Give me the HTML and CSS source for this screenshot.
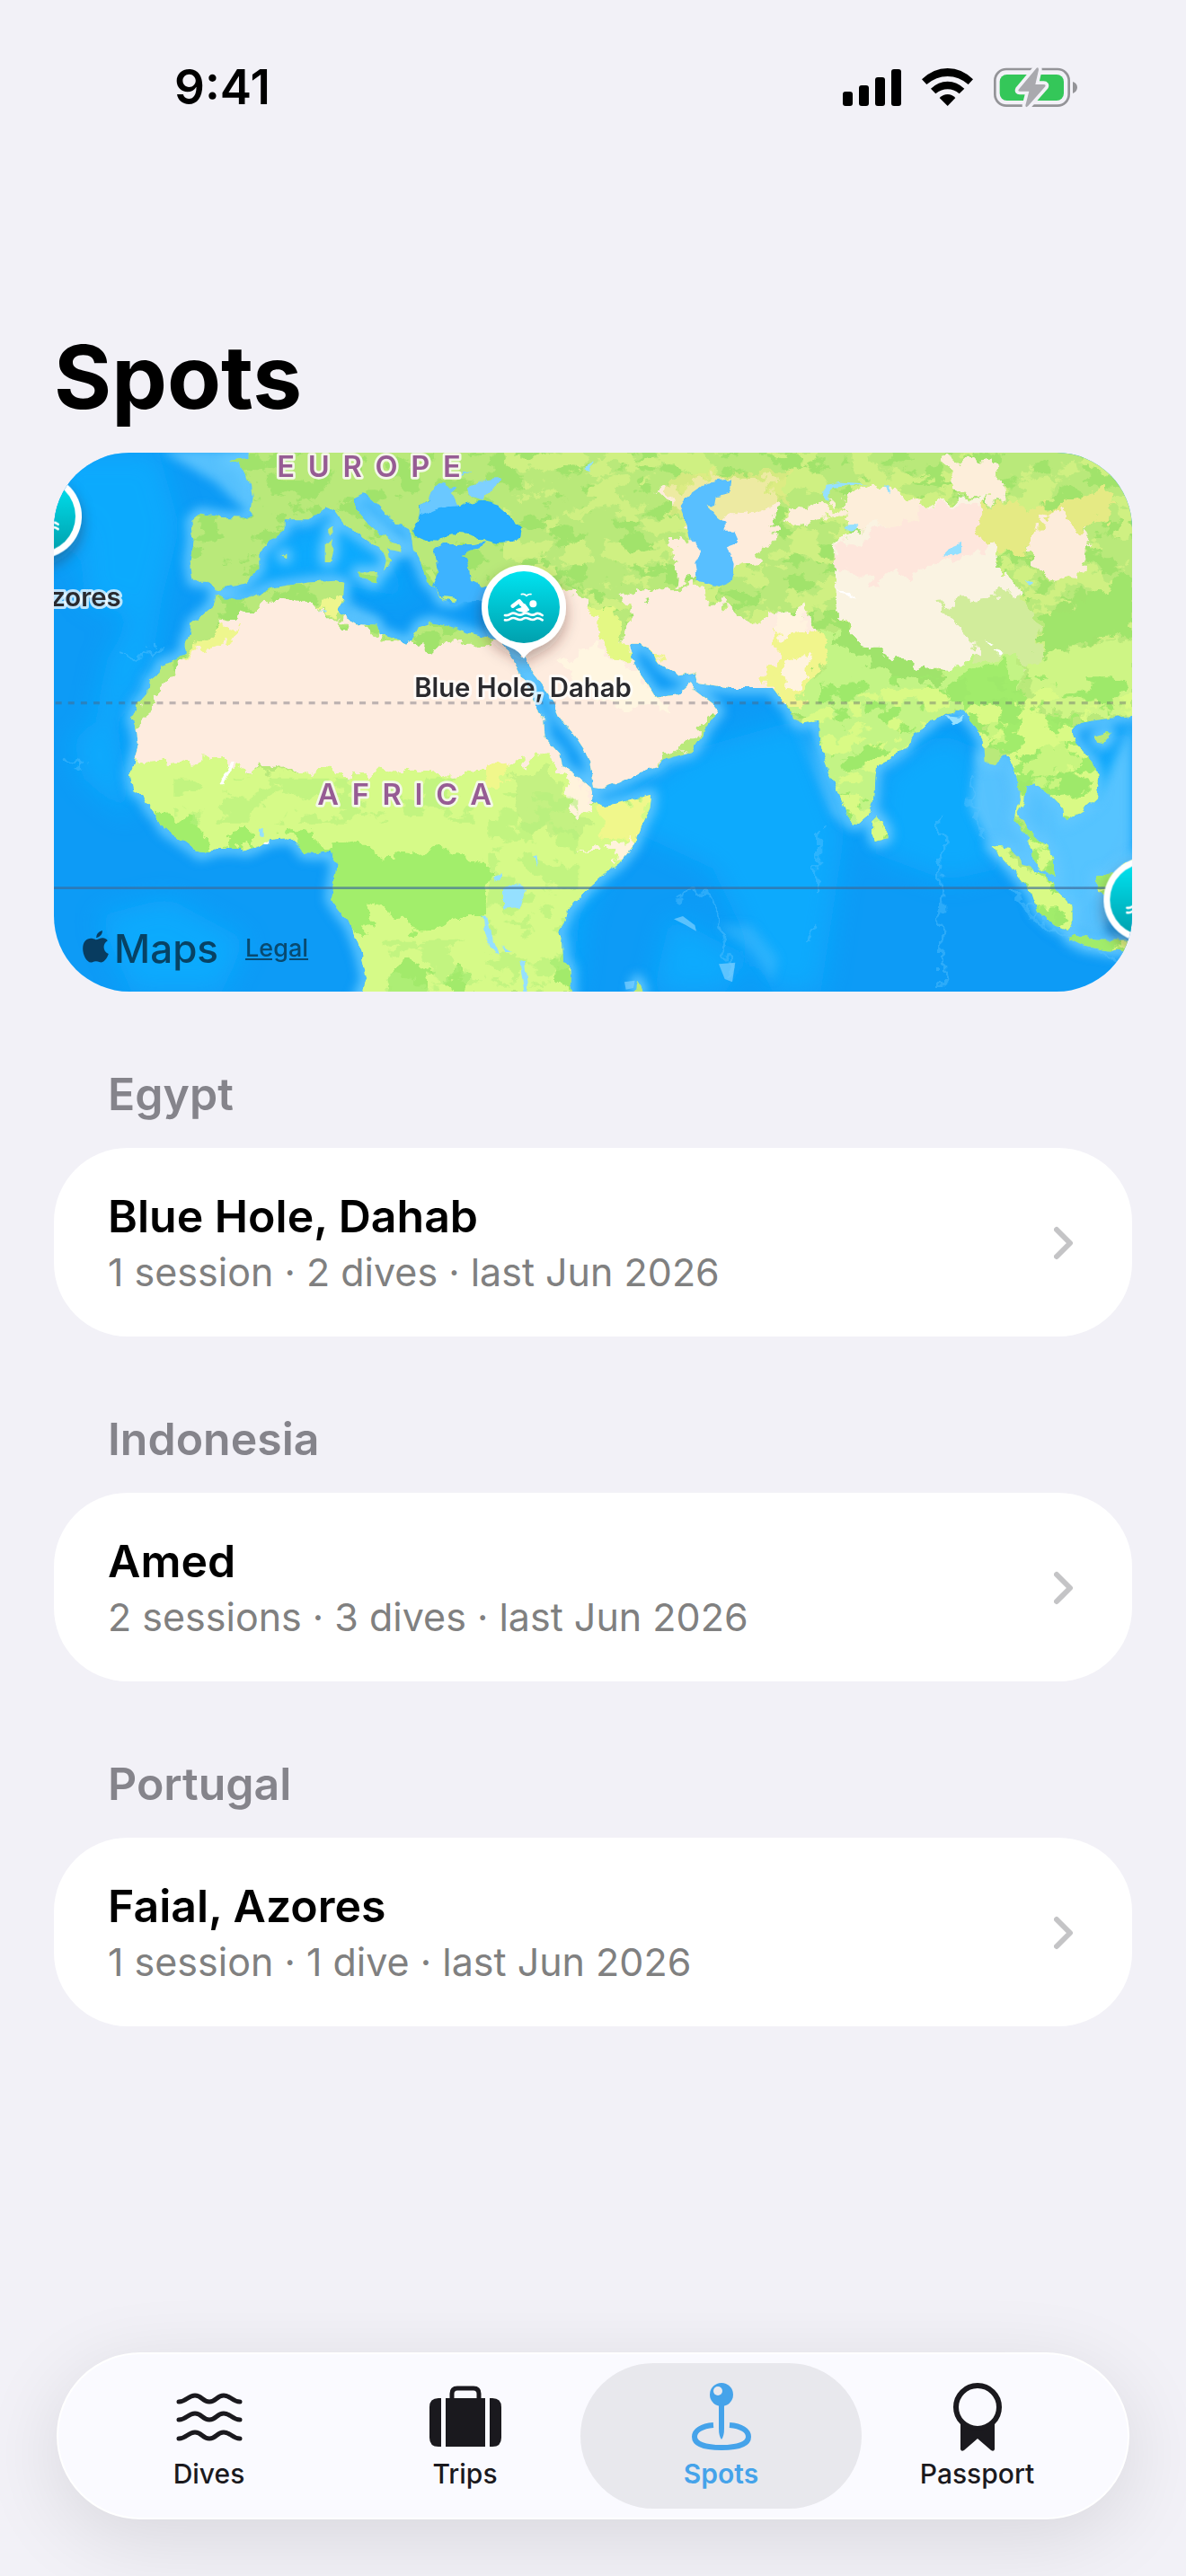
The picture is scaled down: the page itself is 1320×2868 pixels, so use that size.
FILE: index.html
```html
<!DOCTYPE html>
<html lang="en">
<head>
    <meta charset="utf-8">
    <meta name="viewport" content="width=device-width, initial-scale=1">
    <title>Spots</title>
    <link rel="stylesheet" href="styles.css">
</head>
<body>
<header class="status-bar">
    <span class="time">9:41</span>
    <div class="status-icons">
        <svg width="65" height="41" viewBox="111 48 195 123" aria-hidden="true">
            <rect x="111" y="123" width="33" height="48" rx="9"/>
            <rect x="165" y="102" width="33" height="69" rx="9"/>
            <rect x="219" y="75" width="33" height="96" rx="9"/>
            <rect x="273" y="48" width="33" height="123" rx="9"/>
        </svg>
        <svg width="57" height="42" viewBox="375 45 171 126" aria-hidden="true">
            <path d="M375 82Q413 45 461 45T546 82L530 99Q499 72 461 72T391 99Z"/>
            <path d="M405 113Q430 89 461 89T517 113L500 130Q482 115 461 115T421 130Z"/>
            <path d="M434 144Q446 132 461 132T487 144L461 171Z"/>
        </svg>
        <svg width="93" height="45" viewBox="615 42 279 135" aria-hidden="true">
            <rect x="619" y="48" width="247" height="122" rx="38" fill="none" stroke="#949498" stroke-width="8"/>
            <path d="M879 90Q894 95 894 109T879 129Z" fill="#949498"/>
            <rect x="635" y="66" width="214" height="87" rx="24" fill="#34c759"/>
            <path d="M758 44L698 116Q695 122 702 122H733L721 169Q721 178 729 172L787 106Q790 99 782 99H754L765 50Q765 40 758 44Z" fill="#a9a9ae" stroke="#f2f1f7" stroke-width="22" stroke-linejoin="round" paint-order="stroke"/>
        </svg>
    </div>
</header>

<main class="content">
    <h1>Spots</h1>

    <section class="map" aria-label="Map of dive spots">
        <svg class="map-canvas" viewBox="0 12 3600 1800" preserveAspectRatio="xMidYMid slice">
            <defs>
                <linearGradient id="pinFill" x1="0" y1="0" x2="0" y2="1">
                    <stop offset="0" stop-color="#00e3f0"/>
                    <stop offset="1" stop-color="#00a0ad"/>
                </linearGradient>
                <filter id="soft" x="-10%" y="-10%" width="120%" height="120%"><feGaussianBlur stdDeviation="18"/></filter>
                <filter id="softer" x="-20%" y="-20%" width="140%" height="140%"><feGaussianBlur stdDeviation="45"/></filter>
                <filter id="shadow" x="-40%" y="-40%" width="180%" height="200%">
                    <feDropShadow dx="0" dy="24" stdDeviation="24" flood-color="#401818" flood-opacity=".35"/>
                </filter>
                <filter id="coast" filterUnits="userSpaceOnUse" x="0" y="12" width="3600" height="1800" color-interpolation-filters="sRGB">
                    <feTurbulence type="fractalNoise" baseFrequency=".03" numOctaves="2" seed="4"/>
                    <feDisplacementMap in="SourceGraphic" scale="24" xChannelSelector="R" yChannelSelector="G"/>
                </filter>
                <filter id="ragged" filterUnits="userSpaceOnUse" x="0" y="12" width="3600" height="1800" color-interpolation-filters="sRGB">
                    <feTurbulence type="fractalNoise" baseFrequency=".018" numOctaves="3" seed="9"/>
                    <feDisplacementMap in="SourceGraphic" scale="90" xChannelSelector="R" yChannelSelector="G"/>
                </filter>
                <!-- vegetation speckle, kept only inside the shape it is applied to -->
                <filter id="speckle" filterUnits="userSpaceOnUse" x="0" y="12" width="3600" height="1800" color-interpolation-filters="sRGB">
                    <feTurbulence type="fractalNoise" baseFrequency=".009 .013" numOctaves="5" seed="12"/>
                    <feColorMatrix values="0 0 0 0 0  0 0 0 0 0  0 0 0 0 0  30 0 0 0 -16.5"/>
                    <feComposite in="SourceGraphic" operator="in"/>
                </filter>
                <filter id="speckle2" filterUnits="userSpaceOnUse" x="0" y="12" width="3600" height="1800" color-interpolation-filters="sRGB">
                    <feTurbulence type="fractalNoise" baseFrequency=".009 .013" numOctaves="5" seed="31"/>
                    <feColorMatrix values="0 0 0 0 0  0 0 0 0 0  0 0 0 0 0  0 30 0 0 -16"/>
                    <feComposite in="SourceGraphic" operator="in"/>
                </filter>
                <path id="africa" d="M540 490L525 530 460 585 455 620 440 640V683L385 712 355 720 350 750 318 775 312 815 280 850 260 900 275 940 282 990 270 1030 257 1085 268 1140 300 1160 320 1200 355 1240 370 1270 430 1310 490 1353 550 1335 620 1335 640 1342 670 1330 720 1305 790 1298 815 1320 835 1350 890 1352 915 1345 945 1380 935 1440 930 1470 925 1500 950 1540 990 1590 1010 1640 1025 1680 1040 1750 1045 1770 1015 1840H1725L1723 1735 1700 1705 1698 1650 1685 1620 1705 1570 1720 1535 1780 1470 1830 1425 1890 1380 1935 1325 1965 1250 1990 1200 1995 1155 1900 1178 1830 1195 1800 1175 1795 1150 1790 1130 1730 1080 1700 1060 1690 1020 1640 965 1635 900 1610 870 1590 800 1550 740 1515 670 1500 640 1450 632 1370 612 1320 595 1260 578 1220 590 1200 630 1180 650 1130 628 1085 615 1080 590 1010 585 970 560 945 540 965 505 970 450 935 440 860 445 780 455 720 465 650 500 570 500Z"/>
                <path id="eurasia" d="M650 -20V30L575 40 620 50 640 90 660 120 665 160 655 230 560 228 490 215 460 240 465 300 455 380 465 440 510 440 545 470 600 455 640 445 685 400V345L730 300 770 270V235L850 235 910 195 935 205 970 255 1050 310 1100 345 1110 370 1100 410 1125 370 1120 335 1160 345 1150 320 1085 280 1045 245 1005 200V160L1035 145 1080 185 1120 230 1190 270 1200 340 1225 385 1245 440 1275 465 1295 505 1340 508 1390 470 1450 465 1540 470 1560 520 1540 600 1530 640 1560 700 1580 680 1585 720 1610 760 1640 800 1670 850 1695 905 1735 950 1775 1010 1790 1050 1800 1130 1830 1135 1900 1110 1960 1080 2020 1060 2030 1040 2130 1010 2165 960 2170 940 2200 900 2220 875 2200 850 2135 800 2128 782 2085 820 2010 830 1985 790 1935 720 1920 650 1960 650 2000 680 2030 720 2080 755 2140 745 2150 780 2260 798 2400 798 2430 840 2460 870 2470 905 2500 918 2555 905V960L2570 1030 2600 1110 2630 1170 2650 1230 2665 1250 2685 1250 2715 1225 2735 1180 2740 1100 2745 1060 2790 1035 2840 1000 2870 955 2920 920 2950 890 3040 870 3050 895 3080 930 3105 980 3110 1045 3140 1050 3175 1020 3200 1050 3215 1100 3225 1170 3208 1240 3255 1300 3270 1370 3300 1410 3350 1428 3335 1360 3310 1320 3265 1285 3235 1250 3220 1215 3240 1180 3245 1125 3275 1120 3320 1150 3370 1200 3375 1240 3440 1200 3480 1165 3485 1110 3470 1050 3410 980 3395 940 3430 915 3480 905 3640 885V-20Z"/>
                <path id="islands" d="M905 320L925 300 935 330 925 375 905 375ZM918 265L930 258 932 285 920 290ZM1010 410L1080 408 1075 448 1045 440ZM760 355L775 350 775 365ZM2735 1240L2750 1225 2780 1270 2780 1300 2745 1312 2733 1280ZM3130 1325L3190 1335 3240 1385 3310 1425 3345 1470 3400 1530 3400 1590 3385 1610 3340 1590 3285 1540 3265 1480 3230 1440 3190 1390ZM3390 1635L3410 1620 3480 1640 3560 1640 3620 1640V1680L3520 1675 3440 1660ZM3480 1430L3520 1420 3640 1350V1560L3530 1500 3490 1480ZM3475 960L3520 945 3530 955 3505 985 3485 980ZM1940 1812L1948 1775 1965 1812Z"/>
                <clipPath id="land"><use href="#africa"/><use href="#eurasia"/><use href="#islands"/></clipPath>
                <g id="swimmer" fill="none" stroke="#fff" stroke-width="8" stroke-linecap="round" stroke-linejoin="round">
                    <path d="M-63 27Q-53 29-45 23T-24 23-3 23 18 23 39 23 62 27M-63 43Q-53 45-45 39T-24 39-3 39 18 39 39 39 62 43"/>
                    <path d="M-37-4L-15-20 0-2" stroke-width="13"/>
                    <path d="M-14-8L4-10 18 9 4 17-17 13-26 8-4 1Z" fill="#fff" stroke-width="3"/>
                    <circle cx="31" cy="-11" r="12" fill="#fff" stroke="none"/>
                    <path d="M-8-43Q2-46 9-38 16-45 24-43" stroke-width="5"/>
                </g>
                <g id="pin">
                    <path d="M0 172Q-14 146-50 132A141 141 0 1 1 50 132Q14 146 0 172Z" fill="#fff" filter="url(#shadow)"/>
                    <circle r="120" fill="url(#pinFill)"/>
                    <use href="#swimmer"/>
                </g>
            </defs>

            <!-- ocean -->
            <rect y="12" width="3600" height="1800" fill="#0d9bf6"/>
            <g fill="#10aeff" filter="url(#softer)" opacity=".8">
                <path d="M0 12H350L420 260 360 500 330 700 230 900 140 880 180 700 260 560 100 500 90 250 0 430Z"/>
                <path d="M700 300L1000 200 1200 500 900 440 600 480Z"/>
                <path d="M60 980L200 850 260 1240 100 1100Z"/>
                <path d="M150 1560L380 1500 640 1640 560 1812H260Z"/>
                <path d="M1850 1200L2150 1000 2500 900 2640 1280 2560 1812H2400L2200 1400 1900 1260 1760 1560 1740 1812H1680V1560Z"/>
                <path d="M2760 1080L2960 950 3080 1000 3160 1400 2980 1440 2740 1350Z"/>
                <path d="M3300 1180L3600 900V1300L3400 1600 3300 1500ZM2060 1560L2320 1700 2240 1812H2000Z"/>
            </g>
            <g fill="#6acbff" filter="url(#soft)" opacity=".8">
                <path d="M350 0H670V200L620 190 540 110Z"/>
                <path d="M960 500L1080 560 1090 600 980 570ZM1000 140L1200 330 1170 350 1060 300Z"/>
                <path d="M2470 900L2600 1220 2700 1290 2640 1240 2520 1000Z"/>
                <path d="M3080 1000L3240 1060 3480 1180 3600 900V1400L3500 1640 3380 1600 3300 1460 3120 1320 3060 1200Z"/>
                <path d="M2210 1590L2330 1590 2420 1700 2400 1780 2330 1680Z" opacity=".4"/>
            </g>
            <g fill="none" stroke="#62c7ff" stroke-width="38" stroke-linejoin="round" filter="url(#soft)">
                <use href="#africa"/><use href="#eurasia"/><use href="#islands"/>
            </g>
            <g fill="none" stroke="#5cc4ff" stroke-width="10" opacity=".4" filter="url(#ragged)">
                <path d="M220 690L270 700 330 690 360 650M30 1020L100 1060 70 1080M2555 1270V1480M2535 1590L2510 1660M2960 1230V1812M2080 1490L2160 1470 2230 1600 2260 1760M3200 1480L3350 1620 3560 1710M3070 1080L3060 1180 3110 1310"/>
            </g>
            <path d="M2070 1570L2100 1560 2140 1590 2145 1610 2110 1590ZM2220 1720L2275 1715 2265 1780 2240 1770ZM1905 1780L1940 1775 1935 1800 1910 1805Z" fill="#7fd0ff" opacity=".7"/>

            <!-- land -->
            <g filter="url(#coast)">
                <g clip-path="url(#land)">
                    <rect y="-20" width="3640" height="1860" fill="#b9e97a"/>
                    <path d="M400 -20H3640V900H400Z" fill="#9be268" filter="url(#speckle)" opacity=".8"/>
                    <path d="M1500 -20H3640V700H1500Z" fill="#cff082" filter="url(#speckle2)"/>

                    <g filter="url(#ragged)">
                        <!-- deserts -->
                        <path d="M400 720L590 570 680 540 760 500 860 520 960 570 1200 660 1480 650 1640 480 1780 500 1830 600 1900 640 1940 560 1880 470 1980 490 2120 450 2240 520 2330 590 2390 540 2520 560 2560 620 2500 740 2420 840 2200 900 1900 1180H1700L1500 1080 1300 1110 1000 1090 700 1070 200 1060Z" fill="#feecdf"/>
                        <path d="M2020 150L2200 90 2400 100 2420 200 2360 360 2180 420 2060 450 2070 300 2160 260Z" fill="#feecdb"/>
                        <path d="M2060 80H2450V190L2280 200 2170 300 2060 220Z" fill="#e3ea84" opacity=".65"/>
                        <path d="M1800 540L1860 530 1900 640 1950 700 1880 700 1820 640Z" fill="#e4f884"/>
                        <path d="M430 690L560 590 620 610 500 680ZM860 520L970 480V560ZM1960 670L2030 700 2000 740Z" fill="#eef68d"/>
                        <path d="M1680 720L1800 650 1960 740 2050 880 1850 860Z" fill="#fff6e1"/>
                        <!-- Tibet and the Gobi -->
                        <path d="M2600 330L2700 260 2900 190 3100 160 3150 400 3240 480 3120 600 3080 740 2900 740 2720 680 2620 560Z" fill="#faf3e2"/>
                        <path d="M2600 340L2900 190 3140 180 3120 330 2960 370 2860 420 2700 440 2600 400Z" fill="#fee6dc"/>
                        <path d="M2980 40L3150 30 3170 170 3000 150ZM2440 200L2560 180 2640 220 2500 250ZM2600 180L2700 120 2900 170 2880 240 2680 260Z" fill="#fdeeda"/>
                        <path d="M3100 170L3340 190 3500 120 3560 200 3400 290 3280 340 3160 350 3080 290Z" fill="#e5ea84"/>
                        <path d="M3280 240L3360 190 3380 260 3450 270 3440 420 3340 440 3250 370Z" fill="#fdecdb"/>
                        <!-- south and east Asia -->
                        <path d="M2960 520L3220 480 3300 620 3280 720 3080 700 3040 620Z" fill="#d1ec9b"/>
                        <path d="M2560 600L2640 600 2760 720 2960 760 3060 700 3220 690 3240 900 3160 960 2980 880 2740 1300 2500 1240 2540 900 2420 870 2560 740Z" fill="#c3f485"/>
                        <path d="M2590 540L2700 650 2860 720 3000 760 2960 790 2790 760 2640 670Z" fill="#9fe36b"/>
                        <path d="M3020 760L3180 700 3260 880 3420 900 3520 1060V1220L3400 1260 3420 1400 3640 1340V1720H3100V1350L3260 1400 3180 1020 3040 880Z" fill="#a1ec6b"/>
                        <path d="M3240 1000L3360 970 3420 1060 3420 1120 3260 1130ZM3380 1160L3460 1090 3470 1160ZM3100 880L3160 860 3160 960 3120 980Z" fill="#c8f57f"/>
                        <path d="M3300 560L3420 520 3560 420 3640 440V600L3420 640 3300 740Z" fill="#a0e56b"/>
                        <path d="M3240 720L3640 600V900L3300 880Z" fill="#cef585"/>
                        <path d="M2410 600L2540 600 2600 640 2480 860 2380 820Z" fill="#f1f58c"/>
                        <path d="M2440 700L2540 680 2480 830 2450 820ZM2420 560L2500 520 2510 610 2430 650Z" fill="#fff3df"/>
                    </g>
                    <g fill="#9ee96a" filter="url(#speckle)">
                        <path d="M2560 760H3640V1700H2500Z"/>
                    </g>
                    <g fill="#d9fa85" filter="url(#speckle2)">
                        <path d="M2700 800H3640V1700H2500V900Z"/>
                    </g>

                    <!-- tropical Africa -->
                    <g filter="url(#ragged)">
                        <path d="M200 1050L340 1030 380 1065 480 1035 620 1055 720 1100 840 1070 1000 1090 1200 1085 1440 1090 1480 1060 1640 1030 1690 1060 1740 1200 2020 1150 2040 1400 1800 1850H900L860 1400 200 1360Z" fill="#d6fa88"/>
                        <path d="M340 1220L470 1240 520 1330 500 1380H340ZM560 1330L600 1265 660 1290 680 1340ZM770 1270L840 1270 900 1320 1000 1310 1100 1350 1200 1360 1270 1310 1350 1360 1470 1400 1430 1560 1340 1560 1240 1620 1160 1570 1060 1530 1050 1600 1020 1630 900 1480 830 1370Z" fill="#a2ee6b"/>
                        <path d="M1520 1090L1640 1060 1720 1170 1790 1260 1700 1300 1560 1250Z" fill="#c4f182"/>
                        <path d="M1430 1070L1520 1040 1510 1110 1440 1110ZM1820 1200L2020 1150 1950 1300 1820 1290Z" fill="#f0f78b"/>
                        <path d="M1690 1070L1760 1090 1810 1200 1740 1220ZM1840 1320L1950 1290 1900 1370ZM1760 1350L1830 1330 1820 1350Z" fill="#fff3dc"/>
                        <path d="M1150 1700L1260 1740 1240 1840H1120ZM1280 1760L1380 1750 1370 1800ZM1650 1710L1740 1700 1730 1830 1690 1780Z" fill="#a2ea6b"/>
                    </g>
                    <path d="M1450 1150H1750V1840H1100V1640H1450ZM400 1100H1400V1250H400Z" fill="#b4f07c" filter="url(#speckle2)" opacity=".6"/>
                </g>

                <!-- inland water -->
                <path d="M1200 270L1220 230 1222 190 1260 160 1345 190 1355 195 1380 180 1430 172 1480 188 1520 225 1560 262 1555 290 1530 312 1480 315 1430 302 1385 282 1350 278 1310 290 1280 308 1240 305 1210 292Z" fill="#25adff"/>
                <path d="M1220 225L1225 185 1250 170 1260 142 1285 120 1305 108 1320 128 1350 130 1325 150 1340 165 1350 190 1290 195Z" fill="#6ac8ff"/>
                <path d="M1380 130L1440 100 1495 95 1460 140 1430 170 1385 155ZM1355 95L1370 80 1395 75 1370 90Z" fill="#7ed0ff"/>
                <path d="M2090 190L2110 160 2180 110 2260 100 2255 150 2210 160 2205 190 2180 190 2215 230 2240 250 2240 275 2275 275 2290 310 2250 325 2270 380 2265 440 2220 460 2150 440 2140 380 2160 340 2130 300 2105 230Z" fill="#58bfff"/>
                <path d="M2570 160L2575 120 2630 110 2715 115 2640 122 2600 125 2585 170ZM2970 355L3000 325 3030 312 3030 345 3000 358ZM2770 120L2790 125 2785 145ZM2640 262L2690 255 2670 272ZM3245 437L3270 445 3262 458ZM1770 70L1800 40 1790 75ZM2975 888L3040 895 3000 920Z" fill="#95e0ff"/>
                <path d="M1500 1470L1540 1452 1578 1470 1555 1530 1500 1535ZM1432 1555L1445 1560 1460 1620 1490 1690 1475 1690 1440 1620ZM1468 1430L1497 1410 1495 1425 1472 1445ZM1495 1660L1530 1680 1510 1680ZM1555 1710L1572 1715 1583 1812H1570ZM1603 1355L1615 1350 1620 1400ZM885 540L915 542 910 552ZM687 1265H698V1298H687Z" fill="#95e0ff"/>
                <path d="M1270 330L1300 318 1350 318 1400 318 1440 310 1430 325 1365 350 1385 390 1392 440 1450 470 1440 510 1330 520 1300 500 1265 450 1285 410 1272 370Z" fill="#3db3ff"/>
                <path d="M1240 405L1262 402 1280 430 1270 450ZM1300 492L1345 498 1340 508 1302 500Z" fill="#c3ee78"/>
                <path d="M550 1120L590 1050 600 1050 565 1120ZM3110 640L3140 650 3130 655ZM3135 670L3170 680 3160 692ZM2610 475L2660 480 2675 500ZM700 1310H715V1317H700Z" fill="#fff"/>
            </g>

            <!-- tropic and equator -->
            <path d="M5 848H3600" stroke="#5a5a68" stroke-opacity=".38" stroke-width="10" stroke-dasharray="21 21.3"/>
            <path d="M0 1466H3600" stroke="#3c6a98" stroke-opacity=".65" stroke-width="8"/>

            <g class="region">
                <text x="745" y="94">EUROPE</text>
                <text x="880" y="1188">AFRICA</text>
            </g>

            <use href="#pin" x="-48" y="224"/>
            <use href="#pin" x="1569" y="528"/>
            <use href="#pin" x="3646" y="1505"/>

            <g class="place">
                <text x="224" y="525" text-anchor="end">Faial, Azores</text>
                <text x="1566" y="828" text-anchor="middle">Blue Hole, Dahab</text>
            </g>
        </svg>
        <div class="attribution">
            <span class="brand">
                <svg width="29" height="36" viewBox="98 704 86 108" aria-hidden="true">
                    <path d="M143 729Q142 711 163 704 165 722 143 729ZM141 735C151 734 168 720 181 738 162 750 165 775 184 782 177 801 166 813 155 810 145 805 137 806 130 810 113 816 98 787 98 765 98 730 124 725 141 735Z" fill="#083c60"/>
                </svg>
                Maps
            </span>
            <a class="legal" href="#legal">Legal</a>
        </div>
    </section>

    <section class="group">
        <h2>Egypt</h2>
        <a class="card" href="#blue-hole">
            <span class="card-text">
                <strong>Blue Hole, Dahab</strong>
                <span>1 session · 2 dives · last Jun 2026</span>
            </span>
            <svg class="chevron" width="22" height="38" viewBox="0 0 22 38" aria-hidden="true"><path d="M3 4L18 19 3 34"/></svg>
        </a>
    </section>

    <section class="group">
        <h2>Indonesia</h2>
        <a class="card" href="#amed">
            <span class="card-text">
                <strong>Amed</strong>
                <span>2 sessions · 3 dives · last Jun 2026</span>
            </span>
            <svg class="chevron" width="22" height="38" viewBox="0 0 22 38" aria-hidden="true"><path d="M3 4L18 19 3 34"/></svg>
        </a>
    </section>

    <section class="group">
        <h2>Portugal</h2>
        <a class="card" href="#faial">
            <span class="card-text">
                <strong>Faial, Azores</strong>
                <span>1 session · 1 dive · last Jun 2026</span>
            </span>
            <svg class="chevron" width="22" height="38" viewBox="0 0 22 38" aria-hidden="true"><path d="M3 4L18 19 3 34"/></svg>
        </a>
    </section>
</main>

<nav class="tab-bar">
    <a class="tab" href="#dives">
        <svg width="84" height="78" viewBox="0 0 84 78" aria-hidden="true">
            <g fill="none" stroke="currentColor" stroke-width="5" stroke-linecap="round">
                <path d="M8 22C17 22 18 15 26 15S34 22 42 22 50 15 58 15 67 22 76 22"/>
                <path d="M8 42C17 42 18 35 26 35S34 42 42 42 50 35 58 35 67 42 76 42"/>
                <path d="M8 63C17 63 18 56 26 56S34 63 42 63 50 56 58 56 67 63 76 63"/>
            </g>
        </svg>
        Dives
    </a>
    <a class="tab" href="#trips">
        <svg width="84" height="78" viewBox="0 0 84 78" aria-hidden="true">
            <path d="M27 19V13Q27 7 33 7H51Q57 7 57 13V19" fill="none" stroke="currentColor" stroke-width="5"/>
            <path d="M15 18V72H12Q2 72 2 62V28Q2 18 12 18ZM20 18H64V72H20ZM69 18H72Q82 18 82 28V62Q82 72 72 72H69Z" fill="currentColor"/>
        </svg>
        Trips
    </a>
    <a class="tab active" href="#spots" aria-current="page">
        <svg width="84" height="78" viewBox="0 0 84 78" aria-hidden="true">
            <path d="M33 48C20 49 12 54 12 61 12 69 24 73 42 73S72 69 72 61C72 54 64 49 51 48" fill="none" stroke="currentColor" stroke-width="6"/>
            <path d="M39 26H45V52Q45 60 42 64 39 60 39 52Z" fill="currentColor"/>
            <circle cx="42" cy="14" r="13" fill="currentColor"/>
            <circle cx="38" cy="10" r="5" fill="#e8e8ed"/>
        </svg>
        Spots
    </a>
    <a class="tab" href="#passport">
        <svg width="84" height="78" viewBox="0 0 84 78" aria-hidden="true">
            <circle cx="42" cy="28" r="24" fill="none" stroke="currentColor" stroke-width="6"/>
            <path d="M23 45Q31 54 42 54T61 45V75Q60 78 57 76L42 63 27 76Q24 78 23 75Z" fill="currentColor"/>
        </svg>
        Passport
    </a>
</nav>
</body>
</html>
```
FILE: styles.css
```css
* {
    box-sizing: border-box;
}
body {
    font-family: Inter, "Liberation Sans", sans-serif;
    background-color: #f2f1f7;
    color: #000;
    margin: 0;
    min-height: 100vh;
    display: flex;
    flex-direction: column;
}
a {
    color: inherit;
    text-decoration: none;
}
.status-bar {
    display: flex;
    justify-content: space-between;
    align-items: center;
    padding: 66px 121px 0 194px;
}
.time {
    font-size: 53px;
    line-height: 62px;
    font-weight: 600;
}
.status-icons {
    display: flex;
    align-items: center;
    gap: 23px;
}
.content {
    padding: 230px 60px 60px;
}
h1 {
    font-size: 98px;
    line-height: 124px;
    font-weight: 700;
    margin: 0 0 22px;
}
.map {
    position: relative;
    aspect-ratio: 2 / 1;
    border-radius: 84px;
    overflow: hidden;
}
.map-canvas {
    display: block;
    width: 100%;
    height: 100%;
}
.region {
    font-size: 98px;
    font-weight: 600;
    letter-spacing: 44px;
    fill: #965c94;
    stroke: #f4f8e8;
    stroke-width: 16px;
    stroke-linejoin: round;
    paint-order: stroke;
}
.place {
    font-size: 88px;
    font-weight: 600;
    fill: #2a2a2e;
    stroke: #ffffffb8;
    stroke-width: 18px;
    stroke-linejoin: round;
    paint-order: stroke;
}
.attribution {
    position: absolute;
    left: 32px;
    bottom: 20px;
    display: flex;
    align-items: center;
    gap: 30px;
    color: #084a70;
}
.brand {
    display: flex;
    align-items: baseline;
    gap: 6px;
    font-size: 44px;
    line-height: 56px;
    font-weight: 500;
    color: #074264;
}
.legal {
    font-size: 27px;
    line-height: 56px;
    font-weight: 500;
    text-decoration: underline;
}
h2 {
    font-size: 50px;
    line-height: 66px;
    font-weight: 600;
    color: #85848b;
    margin: 0;
    padding: 81px 60px 27px;
}
.card {
    display: flex;
    justify-content: space-between;
    align-items: center;
    padding: 44px 65px 42px 60px;
    background-color: #fff;
    border-radius: 82px;
}
.card-text {
    display: flex;
    flex-direction: column;
    font-size: 43px;
    line-height: 60px;
    color: #808080;
}
.card-text strong {
    font-size: 50px;
    line-height: 64px;
    font-weight: 600;
    color: #000;
}
.chevron path {
    fill: none;
    stroke: #c4c4c6;
    stroke-width: 6px;
    stroke-linecap: round;
    stroke-linejoin: round;
}
.tab-bar {
    display: grid;
    grid-template-columns: repeat(4, 1fr);
    margin: auto 63px 63px;
    padding: 10px 25px;
    background-color: #fafaff;
    border: 2px solid #fff;
    border-radius: 93px;
    box-shadow: 0 20px 90px rgba(0, 0, 0, 0.11);
}
.tab {
    display: flex;
    flex-direction: column;
    align-items: center;
    gap: 4px;
    margin: 0 -14px;
    padding: 21px 0 19px;
    border-radius: 81px;
    font-size: 30px;
    line-height: 40px;
    font-weight: 500;
    color: #1a191e;
}
.tab.active {
    background-color: #e8e8ed;
    color: #45a3ea;
    font-weight: 600;
}
```
